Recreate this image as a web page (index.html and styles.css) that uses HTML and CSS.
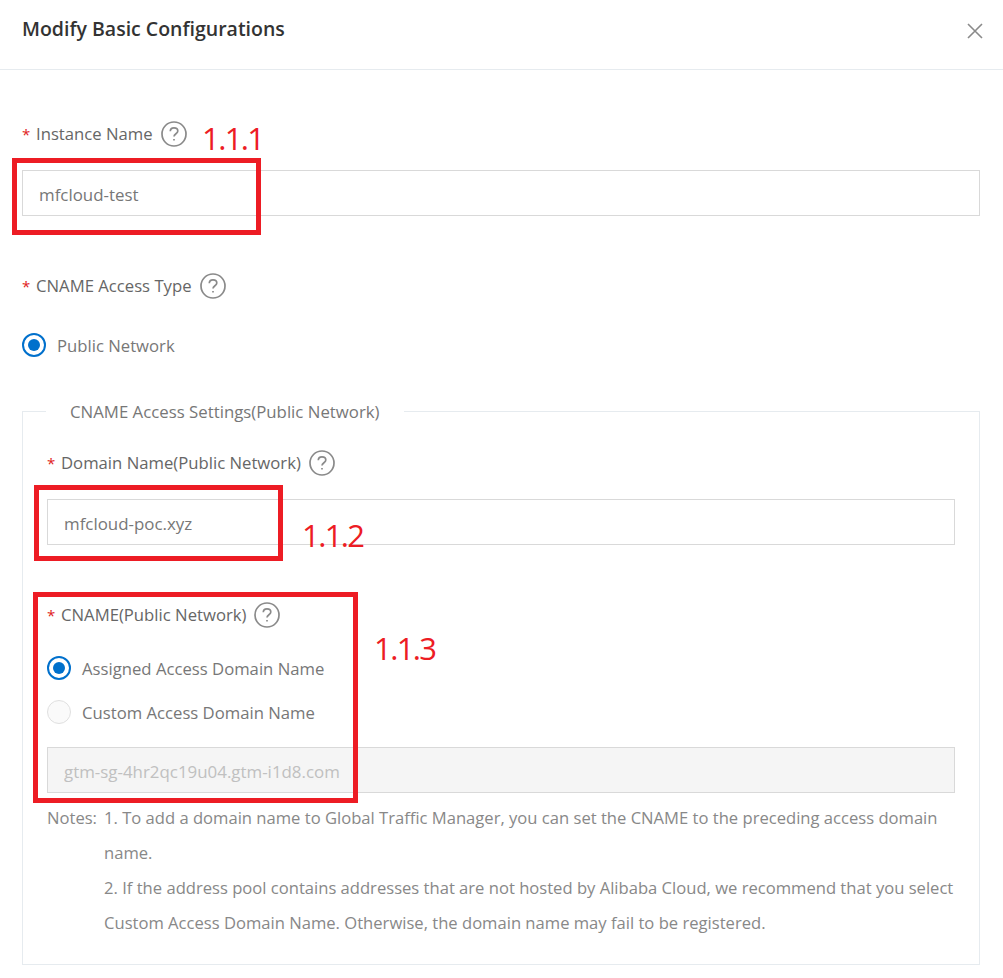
FILE: index.html
```html
<!DOCTYPE html>
<html lang="en">
<head>
  <meta charset="UTF-8" />
  <meta name="viewport" content="width=device-width, initial-scale=1.0"/>
  <title>Modify Basic Configurations</title>
  <link rel="stylesheet" href="styles.css">
</head>
<body>

  <div class="dialog">
    <!-- Header -->
    <div class="dialog-header">
      <h1>Modify Basic Configurations</h1>
      <svg class="close-icon" width="16" height="16" viewBox="0 0 16 16">
        <path d="M1 1 L15 15 M15 1 L1 15" />
      </svg>
    </div>

    <!-- Form -->
    <form class="dialog-body">
      <div class="form-label">
        <span class="star">*</span>
        <label>Instance Name</label>
        <svg class="help-icon" width="26" height="26" viewBox="0 0 26 26">
          <circle cx="13" cy="13" r="12" />
          <path d="M9.3 10.2 C9.3 8 11 6.8 13 6.8 C15.2 6.8 16.8 8.1 16.8 10 C16.8 12.6 13 12.9 13 15.6" />
          <path class="dot" d="M13 18 L13 19.6" />
        </svg>
      </div>
      <input class="text-input" type="text" value="mfcloud-test" />

      <div class="form-label gap-top">
        <span class="star">*</span>
        <label>CNAME Access Type</label>
        <svg class="help-icon" width="26" height="26" viewBox="0 0 26 26">
          <circle cx="13" cy="13" r="12" />
          <path d="M9.3 10.2 C9.3 8 11 6.8 13 6.8 C15.2 6.8 16.8 8.1 16.8 10 C16.8 12.6 13 12.9 13 15.6" />
          <path class="dot" d="M13 18 L13 19.6" />
        </svg>
      </div>
      <div class="radio-row access-type">
        <span class="radio checked"></span>
        <span>Public Network</span>
      </div>

      <fieldset class="settings">
        <legend>CNAME Access Settings(Public Network)</legend>

        <div class="form-label">
          <span class="star">*</span>
          <label>Domain Name(Public Network)</label>
          <svg class="help-icon" width="26" height="26" viewBox="0 0 26 26">
            <circle cx="13" cy="13" r="12" />
            <path d="M9.3 10.2 C9.3 8 11 6.8 13 6.8 C15.2 6.8 16.8 8.1 16.8 10 C16.8 12.6 13 12.9 13 15.6" />
            <path class="dot" d="M13 18 L13 19.6" />
          </svg>
        </div>
        <input class="text-input" type="text" value="mfcloud-poc.xyz" />

        <div class="form-label gap-top">
          <span class="star">*</span>
          <label>CNAME(Public Network)</label>
          <svg class="help-icon" width="26" height="26" viewBox="0 0 26 26">
            <circle cx="13" cy="13" r="12" />
            <path d="M9.3 10.2 C9.3 8 11 6.8 13 6.8 C15.2 6.8 16.8 8.1 16.8 10 C16.8 12.6 13 12.9 13 15.6" />
            <path class="dot" d="M13 18 L13 19.6" />
          </svg>
        </div>
        <div class="radio-row first-choice">
          <span class="radio checked"></span>
          <span>Assigned Access Domain Name</span>
        </div>
        <div class="radio-row second-choice">
          <span class="radio disabled"></span>
          <span>Custom Access Domain Name</span>
        </div>
        <input class="text-input cname-input" type="text" value="gtm-sg-4hr2qc19u04.gtm-i1d8.com" disabled />

        <div class="notes">
          <span class="notes-title">Notes:</span>
          <div class="notes-list">
            <div>1. To add a domain name to Global Traffic Manager, you can set the CNAME to the preceding access domain name.</div>
            <div>2. If the address pool contains addresses that are not hosted by Alibaba Cloud, we recommend that you select Custom Access Domain Name. Otherwise, the domain name may fail to be registered.</div>
          </div>
        </div>
      </fieldset>
    </form>
  </div>

  <!-- Annotations drawn over the screenshot -->
  <div class="mark mark-1"></div>
  <div class="mark mark-2"></div>
  <div class="mark mark-3"></div>
  <span class="mark-label label-1">1.1.1</span>
  <span class="mark-label label-2">1.1.2</span>
  <span class="mark-label label-3">1.1.3</span>

</body>
</html>
```

FILE: styles.css
```css
body {
  font-family: 'Open Sans', 'Noto Sans', sans-serif;
  font-size: 16.7px;
  background: #fff;
  color: #666;
  margin: 0;
  position: relative;
  height: 978px;
  overflow: hidden;
}

.dialog-header {
  height: 69px;
  border-bottom: 1px solid #e6ebef;
  padding: 0 20px 0 22px;
  display: flex;
  align-items: center;
  justify-content: space-between;
}

.dialog-header h1 {
  margin: 0 0 12px;
  font-size: 19.5px;
  font-weight: 600;
  color: #333;
}

.close-icon {
  margin: 0 0 8px;
}

.close-icon path {
  stroke: #8a8a8a;
  stroke-width: 1.6;
  fill: none;
}

.dialog-body {
  padding: 49px 23px 0 22px;
}

.form-label {
  display: flex;
  align-items: center;
  height: 30px;
  margin-bottom: 21px;
}

.form-label label {
  padding-bottom: 2px;
}

.form-label.gap-top {
  margin-top: 55px;
}

.star {
  color: #e02020;
  width: 14px;
  font-size: 15px;
}

.help-icon {
  margin-left: 8px;
}

.help-icon circle,
.help-icon path {
  fill: none;
  stroke: #8a8a8a;
  stroke-width: 1.7;
}

.text-input {
  display: block;
  box-sizing: border-box;
  width: 100%;
  height: 46px;
  padding: 2px 16px 0;
  border: 1px solid #d9d9d9;
  background: #fff;
  font-family: inherit;
  font-size: 16.9px;
  color: #777;
  outline: none;
}

.text-input:disabled {
  background: #f5f5f5;
  color: #c0c0c0;
}

.radio-row {
  display: flex;
  align-items: center;
  gap: 11px;
  height: 30px;
  color: #777;
}

.radio {
  box-sizing: border-box;
  width: 24px;
  height: 24px;
  border-radius: 50%;
  border: 2px solid #0070cc;
  background: #fff;
  position: relative;
}

.radio.checked::after {
  content: '';
  position: absolute;
  top: 4px;
  left: 4px;
  width: 12px;
  height: 12px;
  border-radius: 50%;
  background: #0070cc;
}

.radio.disabled {
  border: 1px solid #e0e0e0;
  background: #fafafa;
}

.access-type {
  margin-top: -21px;
  padding-top: 29px;
  box-sizing: content-box;
}

.settings {
  margin: 35px 0 0;
  padding: 21px 24px 24px;
  border: 1px solid #e6ebef;
  min-width: 0;
}

.settings legend {
  margin-left: -1px;
  padding: 2px 24px 0;
  line-height: 30px;
  font-size: 16.8px;
  color: #777;
}

.settings .form-label {
  margin-bottom: 21px;
}

.settings .form-label.gap-top {
  margin-bottom: 0;
}

.first-choice {
  margin-top: 23px;
}

.second-choice {
  margin-top: 14px;
}

.cname-input {
  margin-top: 20px;
}

.notes {
  display: flex;
  margin-top: 7px;
  line-height: 35px;
  font-size: 16.6px;
  color: #888;
}

.notes-title {
  width: 57px;
  flex-shrink: 0;
}

.mark {
  position: absolute;
  box-sizing: border-box;
  border: 5px solid #ed1c24;
}

.mark-1 { left: 12px; top: 158px; width: 249px; height: 77px; }
.mark-2 { left: 34px; top: 485px; width: 249px; height: 76px; }
.mark-3 { left: 33px; top: 592px; width: 325px; height: 211px; }

.mark-label {
  position: absolute;
  color: #ed1c24;
  font-size: 31px;
  line-height: 40px;
  letter-spacing: -1.6px;
}

.label-1 { left: 202px; top: 118px; }
.label-2 { left: 302px; top: 515px; }
.label-3 { left: 374px; top: 628px; }
```
